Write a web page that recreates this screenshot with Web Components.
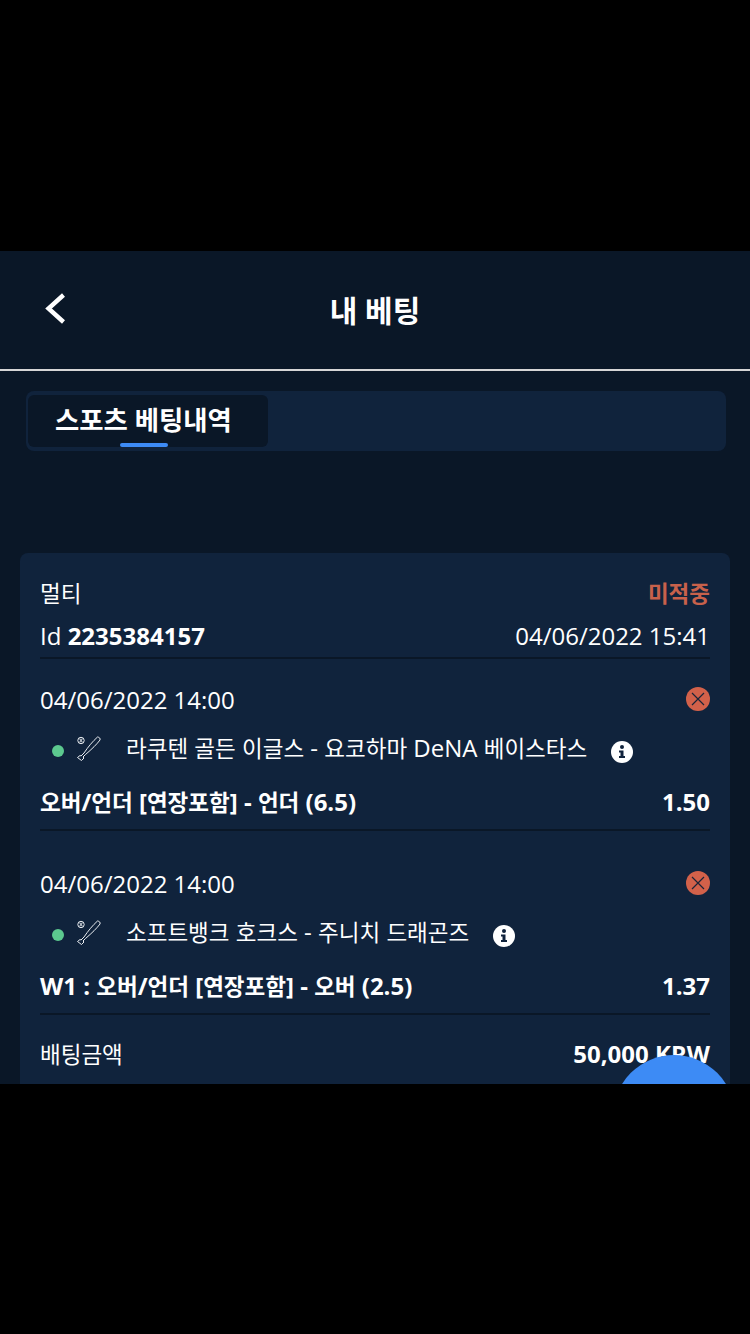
<!DOCTYPE html>
<html lang="ko">
<head>
<meta charset="utf-8">
<title>내 베팅</title>
<style>
  html, body { margin: 0; padding: 0; background: #000; }
  body { width: 750px; height: 1334px; overflow: hidden; font-family: "Open Sans", "Noto Sans CJK KR", sans-serif; }
</style>
</head>
<body>
<bet-screen>
  <bet-header slot="header" title="내 베팅"></bet-header>
  <bet-tabs slot="tabs" label="스포츠 베팅내역"></bet-tabs>
  <bet-card>
    <bet-leg date="04/06/2022 14:00" teams="라쿠텐 골든 이글스 - 요코하마 DeNA 베이스타스" market="오버/언더 [연장포함] - 언더 (6.5)" odds="1.50"></bet-leg>
    <bet-leg date="04/06/2022 14:00" teams="소프트뱅크 호크스 - 주니치 드래곤즈" market="W1 : 오버/언더 [연장포함] - 오버 (2.5)" odds="1.37"></bet-leg>
  </bet-card>
</bet-screen>

<script>
// hangul runs are set a bit smaller than the latin text around them
function ko(str) {
  return str.replace(/[가-힣]+/g, m => `<span class="ko">${m}</span>`);
}
const KO_STYLE = `.ko { font-size: 22.5px; }`;

class BetScreen extends HTMLElement {
  constructor() {
    super()
    this._root = this.attachShadow({ mode: 'open' });
    this._root.innerHTML = `
      <style>
        :host { display: block; padding-top: 251px; color: #fff; }
        .app {
          height: 833px;
          background: #0a1727;
          overflow: hidden;
          position: relative;
          display: flex;
          flex-direction: column;
        }
        .fab {
          position: absolute;
          left: 613px;
          top: 804px;
          width: 122px;
          height: 122px;
          border-radius: 50%;
          background: #3d8bf5;
        }
      </style>
      <div class="app">
        <slot name="header"></slot>
        <slot name="tabs"></slot>
        <slot></slot>
        <div class="fab"></div>
      </div>
    `;
  }
}

class BetHeader extends HTMLElement {
  constructor() {
    super()
    this._root = this.attachShadow({ mode: 'open' });
    this._root.innerHTML = `
      <style>
        :host { display: block; }
        .bar {
          height: 118px;
          border-bottom: 2px solid #d6d6d6;
          display: flex;
          align-items: center;
          justify-content: center;
          position: relative;
        }
        svg { position: absolute; left: 44px; top: 41px; }
        h1 { margin: 2px 0 0; font-size: 30px; line-height: 36px; font-weight: 700; }
      </style>
      <div class="bar">
        <svg width="24" height="34" viewBox="0 0 24 34" fill="none">
          <path d="M19.5 3 L4.5 16.5 L19.5 30" stroke="#fff" stroke-width="4.4" />
        </svg>
        <h1>${this.getAttribute('title')}</h1>
      </div>
    `;
  }
}

class BetTabs extends HTMLElement {
  constructor() {
    super()
    this._root = this.attachShadow({ mode: 'open' });
    this._root.innerHTML = `
      <style>
        :host { display: block; padding: 20px 24px 0 26px; }
        .tabs {
          height: 60px;
          box-sizing: border-box;
          padding: 4px 2px 4px;
          background: #10233c;
          border-radius: 8px;
        }
        .tab {
          width: 240px;
          height: 52px;
          box-sizing: border-box;
          padding-left: 27px;
          background: #0a1727;
          border-radius: 6px;
          font-size: 26.4px;
          font-weight: 700;
          line-height: 50px;
          position: relative;
        }
        .tab::after {
          content: "";
          position: absolute;
          left: 92px;
          bottom: 0;
          width: 48px;
          height: 4px;
          border-radius: 2px;
          background: #3d8bf5;
        }
      </style>
      <div class="tabs"><div class="tab">${this.getAttribute('label')}</div></div>
    `;
  }
}

class BetCard extends HTMLElement {
  constructor() {
    super()
    this._root = this.attachShadow({ mode: 'open' });
    this._root.innerHTML = `
      <style>
        :host { display: block; margin: 102px 20px 0; }
        .card {
          background: #10233c;
          border-radius: 8px 8px 0 0;
          padding: 20px 20px 40px;
          font-size: 24px;
        }
        .row { display: flex; justify-content: space-between; align-items: center; }
        .top { height: 42px; }
        .top span { margin-top: -4px; }
        .id { height: 42px; border-bottom: 2px solid #0a1727; }
        .id span { margin-top: -2px; }
        .lost { color: #c8614b; font-weight: 700; }
        b { font-weight: 700; }
        .stake { height: 40px; margin-top: 18px; }
        ${KO_STYLE}
      </style>
      <div class="card">
        <div class="row top"><span>${ko('멀티')}</span><span class="lost">${ko('미적중')}</span></div>
        <div class="row id"><span>Id <b>2235384157</b></span><span>04/06/2022 15:41</span></div>
        <slot></slot>
        <div class="row stake"><span>${ko('배팅금액')}</span><b>50,000 KRW</b></div>
      </div>
    `;
  }
}

class BetLeg extends HTMLElement {
  constructor() {
    super()
    this._root = this.attachShadow({ mode: 'open' });
    this._root.innerHTML = `
      <style>
        :host { display: block; }
        .leg { border-bottom: 2px solid #0a1727; padding-top: 19px; height: 151px; margin-bottom: 12px; }
        :host(:last-child) .leg { margin-bottom: 0; }
        .row { display: flex; justify-content: space-between; align-items: center; }
        .date { height: 44px; }
        .date span { margin-top: -2px; }
        .date svg { margin-top: -2px; }
        .match { height: 52px; display: flex; align-items: center; }
        .dot { width: 12px; height: 12px; border-radius: 50%; background: #5cc98f; margin-left: 12px; margin-top: 6px; }
        .bat { margin-left: 12px; margin-top: 2px; }
        .teams { margin-left: 24px; margin-top: -2px; }
        .info { margin-left: 24px; margin-top: 8px; }
        .market { height: 54px; font-weight: 700; }
        ${KO_STYLE}
      </style>
      <div class="leg">
        <div class="row date">
          <span>${this.getAttribute('date')}</span>
          <svg width="24" height="24" viewBox="0 0 24 24">
            <circle cx="12" cy="12" r="12" fill="#d2614a"/>
            <path d="M6 6 L18 18 M18 6 L6 18" stroke="#1a2438" stroke-width="1.2"/>
          </svg>
        </div>
        <div class="match">
          <span class="dot"></span>
          <svg class="bat" width="26" height="26" viewBox="0 0 26 26" fill="none" stroke="#e8ecf0" stroke-width="1">
            <circle cx="5" cy="4.5" r="3.2"/>
            <path d="M3.8 2.5 Q5.3 4.5 3.8 6.5 M6.2 2.5 Q4.7 4.5 6.2 6.5"/>
            <path d="M21.5 1 C23.5 1.2 24.5 2.5 24 4 C21 8 16 13 9.5 18.5 L7 21 L8 22 L5.5 24.5 L1.5 21.5 L4 19.5 L5 20 L8 17 C12 11 17 5 21.5 1 Z"/>
          </svg>
          <span class="teams">${ko(this.getAttribute('teams'))}</span>
          <svg class="info" width="22" height="22" viewBox="0 0 22 22">
            <circle cx="11" cy="11" r="11" fill="#fff"/>
            <circle cx="11" cy="6" r="2" fill="#10233c"/>
            <path d="M8 9.5 H12.5 V15 H14 V17 H8 V15 H9.5 V11.5 H8 Z" fill="#10233c"/>
          </svg>
        </div>
        <div class="row market"><span>${ko(this.getAttribute('market'))}</span><span>${this.getAttribute('odds')}</span></div>
      </div>
    `;
  }
}

window.customElements.define('bet-screen', BetScreen);
window.customElements.define('bet-header', BetHeader);
window.customElements.define('bet-tabs', BetTabs);
window.customElements.define('bet-card', BetCard);
window.customElements.define('bet-leg', BetLeg);
</script>
</body>
</html>
